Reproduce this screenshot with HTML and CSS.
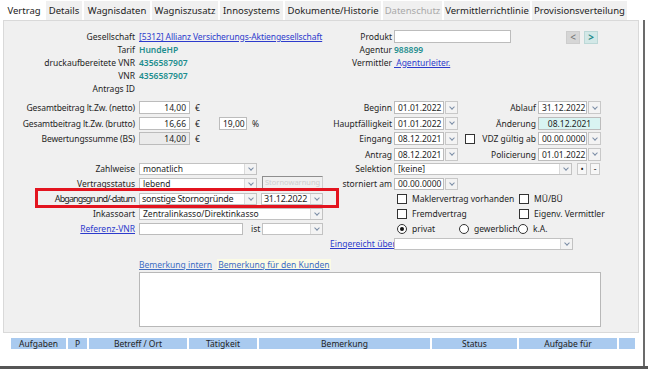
FILE: index.html
```html
<!DOCTYPE html>
<html lang="de">
<head>
    <meta charset="UTF-8">
    <title>Vertrag</title>
    <link rel="stylesheet" href="styles.css">
</head>
<body>
<div class="tabs">
    <div class="tab active w40">Vertrag</div>
    <div class="tab w36">Details</div>
    <div class="tab w66">Wagnisdaten</div>
    <div class="tab w66">Wagniszusatz</div>
    <div class="tab w63">Innosystems</div>
    <div class="tab w96">Dokumente/Historie</div>
    <div class="tab off w59">Datenschutz</div>
    <div class="tab w86">Vermittlerrichtlinie</div>
    <div class="tab w95">Provisionsverteilung</div>
</div>
<div class="frame">
    <div class="panel">
        <!-- Kopfdaten -->
        <div class="sec top">
            <div class="block b-head">
                <span class="lbl">Gesellschaft</span>
                <a class="link tight1">[5312] Allianz Versicherungs-Aktiengesellschaft</a>
                <span class="lbl">Tarif</span>
                <span class="val">HundeHP</span>
                <span class="lbl">druckaufbereitete VNR</span>
                <span class="val">4356587907</span>
                <span class="lbl">VNR</span>
                <span class="val">4356587907</span>
                <span class="lbl">Antrags ID</span>
                <span></span>
            </div>
            <div class="block b-prod">
                <span class="lbl">Produkt</span>
                <div class="field"></div>
                <span class="lbl">Agentur</span>
                <span class="val">988899</span>
                <span class="lbl">Vermittler</span>
                <span><a class="link">&nbsp;Agenturleiter.</a></span>
            </div>
            <div class="nav">
                <span class="navbtn">&lt;</span>
                <span class="navbtn next">&gt;</span>
            </div>
        </div>

        <!-- Beitrag und Termine -->
        <div class="sec mid">
            <div class="block b-left">
                <span class="lbl tight">Gesamtbeitrag lt.Zw. (netto)</span>
                <div class="row"><div class="field num w51">14,00</div><span class="unit">€</span></div>
                <span class="lbl tight">Gesamtbeitrag lt.Zw. (brutto)</span>
                <div class="row"><div class="field num w51">16,66</div><span class="unit">€</span><div class="field num w28">19,00</div><span class="unit">%</span></div>
                <span class="lbl tight">Bewertungssumme (BS)</span>
                <div class="row"><div class="field num w51 ro">14,00</div><span class="unit">€</span></div>
            </div>
            <div class="block b-mid">
                <span class="lbl">Beginn</span>
                <div class="date"><div class="field">01.01.2022</div><i class="arr"></i></div>
                <span class="lbl">Hauptfälligkeit</span>
                <div class="date"><div class="field">01.01.2022</div><i class="arr"></i></div>
                <span class="lbl">Eingang</span>
                <div class="date"><div class="field">08.12.2021</div><i class="arr"></i></div>
                <span class="lbl">Antrag</span>
                <div class="date"><div class="field">08.12.2021</div><i class="arr"></i></div>
            </div>
            <div class="block b-right">
                <span class="lbl">Ablauf</span>
                <div class="date"><div class="field">31.12.2022</div><i class="arr"></i></div>
                <span class="lbl">Änderung</span>
                <div class="field changed">08.12.2021</div>
                <span class="lbl cbl"><i class="cb"></i><span>VDZ gültig ab</span></span>
                <div class="date"><div class="field">00.00.0000</div><i class="arr"></i></div>
                <span class="lbl">Policierung</span>
                <div class="date"><div class="field">01.01.2022</div><i class="arr"></i></div>
            </div>
        </div>

        <!-- Status -->
        <div class="sec low">
            <div class="block b-left">
                <span class="lbl">Zahlweise</span>
                <div class="combo w118"><span>monatlich</span><i class="arr"></i></div>
                <span class="lbl">Vertragsstatus</span>
                <div class="row">
                    <div class="combo w118"><span>lebend</span><i class="arr"></i></div>
                    <div class="storno">Stornowarnung</div>
                </div>
                <span class="lbl big-lbl">Abgangsgrund/-datum</span>
                <div class="row">
                    <div class="combo w118 big"><span>sonstige Stornogründe</span><i class="arr"></i></div>
                    <div class="combo w62 big gap4"><span>31.12.2022</span><i class="arr"></i></div>
                </div>
                <span class="lbl">Inkassoart</span>
                <div class="combo w184"><span>Zentralinkasso/Direktinkasso</span><i class="arr"></i></div>
                <span class="lbl"><a class="link">Referenz-VNR</a></span>
                <div class="row">
                    <div class="field w104"></div>
                    <span class="ist">ist</span>
                    <div class="combo w61"><span></span><i class="arr"></i></div>
                </div>
            </div>
            <div class="block b-sel">
                <span class="lbl">Selektion</span>
                <div class="row">
                    <div class="combo w178"><span>[keine]</span><i class="arr"></i></div>
                    <span class="mini">•</span>
                    <span class="mini second">-</span>
                </div>
                <span class="lbl">storniert am</span>
                <div class="date"><div class="field">00.00.0000</div><i class="arr"></i></div>
                <span></span>
                <div class="row opts">
                    <span class="opt w122"><i class="cb"></i>Maklervertrag vorhanden</span>
                    <span class="opt"><i class="cb"></i>MÜ/BÜ</span>
                </div>
                <span></span>
                <div class="row opts">
                    <span class="opt w122"><i class="cb"></i>Fremdvertrag</span>
                    <span class="opt"><i class="cb"></i>Eigenv. Vermittler</span>
                </div>
                <span></span>
                <div class="row opts">
                    <span class="opt w62"><i class="rb on"></i>privat</span>
                    <span class="opt w59"><i class="rb"></i>gewerblich</span>
                    <span class="opt"><i class="rb"></i>k.A.</span>
                </div>
                <span class="lbl"><a class="link">Eingereicht über</a></span>
                <div class="combo w179"><span></span><i class="arr"></i></div>
            </div>
        </div>

        <div class="remarks">
            <div class="rtabs">
                <a class="rlink">Bemerkung intern</a>
                <a class="rlink cust">Bemerkung für den Kunden</a>
            </div>
            <div class="rbox"></div>
        </div>

        <div class="mark"></div>
    </div>

    <div class="tasks">
        <div class="th w55">Aufgaben</div>
        <div class="th w19">P</div>
        <div class="th w98">Betreff / Ort</div>
        <div class="th w68">Tätigkeit</div>
        <div class="th w171">Bemerkung</div>
        <div class="th w85">Status</div>
        <div class="th w98">Aufgabe für</div>
        <div class="th w16"></div>
    </div>
</div>
<div class="bottom"></div>
</body>
</html>
```

FILE: styles.css
```css
*{
    box-sizing: border-box;
}
body{
    margin: 0;
    width: 648px;
    height: 369px;
    overflow: hidden;
    background-color: #fff;
    font-family: "Noto Sans", sans-serif;
    font-size: 8.5px;
    color: #1e1e1e;
}
a{
    cursor: pointer;
}

/* widths */
.w16{width: 16px;}
.w19{width: 19px;}
.w28{width: 28px;}
.w36{width: 36px;}
.w40{width: 40px;}
.w51{width: 51px;}
.w55{width: 55px;}
.w59{width: 59px;}
.w61{width: 61px;}
.w62{width: 62px;}
.w63{width: 63px;}
.w66{width: 66px;}
.w68{width: 68px;}
.w85{width: 85px;}
.w86{width: 86px;}
.w95{width: 95px;}
.w96{width: 96px;}
.w98{width: 98px;}
.w104{width: 104px;}
.w118{width: 118px;}
.w122{width: 122px;}
.w171{width: 171px;}
.w178{width: 178px;}
.w179{width: 179px;}
.w184{width: 184px;}

/* tabs */
.tabs{
    display: flex;
    gap: 2px;
    height: 20px;
    padding: 1px 0 0 4px;
}
.tab{
    height: 19px;
    line-height: 19px;
    text-align: center;
    font-size: 9.5px;
    background-color: #f0f0f0;
    color: #222;
    white-space: nowrap;
}
.tab.active{
    background-color: #fff;
}
.tab.off{
    color: #a8a8a8;
}

/* frame */
.frame{
    width: 645px;
    height: 346px;
    border-right: 2px solid #6b6b6b;
}
.panel{
    position: relative;
    margin-left: 3px;
    width: 636px;
    height: 313px;
    border: 1px solid #d9d9d9;
    background-color: #f0f0f0;
    padding-top: 9px;
}
.sec{
    display: flex;
}
.block{
    display: grid;
    align-items: center;
}
.lbl{
    text-align: right;
    white-space: nowrap;
    line-height: 13px;
}
.tight{
    letter-spacing: -0.1px;
}
.tight1{
    letter-spacing: -0.1px;
}
.val{
    color: #1d8e8e;
    font-weight: 600;
    white-space: nowrap;
}
.link{
    color: #2d3bcc;
    text-decoration: underline;
    white-space: nowrap;
}
.row{
    display: flex;
    align-items: center;
}

/* top */
.top{
    height: 65px;
}
.top .block{
    grid-auto-rows: 13px;
}
.b-head{
    width: 336px;
    grid-template-columns: 131px 201px;
    column-gap: 4px;
}
.b-prod{
    width: 171px;
    grid-template-columns: 52px 117px;
    column-gap: 2px;
}
.nav{
    display: flex;
    gap: 4px;
    margin: 1px 0 0 55px;
    height: 13px;
}
.navbtn{
    width: 14px;
    height: 13px;
    border: 1px solid #cdcdcd;
    background-color: #d6d6d6;
    color: #707070;
    font-size: 10px;
    line-height: 11px;
    text-align: center;
}
.navbtn.next{
    background-color: #d3e8e7;
    border-color: #bcd8d7;
    color: #1f8a8a;
    font-weight: bold;
}

/* inputs */
.field{
    height: 13px;
    border: 1px solid #bcbcbc;
    background-color: #fff;
    padding: 0 3px;
    line-height: 11px;
    white-space: nowrap;
    overflow: hidden;
}
.num{
    text-align: right;
}
.ro{
    background-color: #ebebeb;
}
.unit{
    width: 29px;
    padding-left: 5px;
}
.changed{
    background-color: #d9f4f2;
    text-align: center;
}
.date{
    display: flex;
    gap: 1px;
}
.date .field{
    width: 50px;
}
.arr{
    width: 13px;
    height: 13px;
    border: 1px solid #c8c8c8;
    background-color: #f3f3f3;
    display: flex;
    align-items: center;
    justify-content: center;
    flex: none;
}
.arr::after{
    content: "";
    width: 3px;
    height: 3px;
    margin-top: -2px;
    border-right: 1px solid #7b8da6;
    border-bottom: 1px solid #7b8da6;
    transform: rotate(45deg);
}

/* mid */
.mid{
    margin-top: 6px;
}
.mid .block{
    grid-auto-rows: 13px;
    row-gap: 2.5px;
}
.b-left{
    width: 326px;
    grid-template-columns: 131px 191px;
    column-gap: 4px;
}
.b-mid{
    width: 130px;
    grid-template-columns: 62px 66px;
    column-gap: 2px;
}
.b-right{
    width: 141px;
    grid-template-columns: 76px 63px;
    column-gap: 2px;
}
.cbl{
    display: flex;
    align-items: center;
    justify-content: space-between;
    padding-left: 5px;
}

/* low */
.low{
    margin-top: 2px;
}
.low .block{
    grid-auto-rows: 12px;
    row-gap: 3px;
}
.low .lbl{
    line-height: 12px;
}
.low .field,
.low .arr{
    height: 12px;
    line-height: 10px;
}
.b-sel{
    width: 279px;
    grid-template-columns: 62px 215px;
    column-gap: 2px;
}
.combo{
    display: flex;
    height: 12px;
    border: 1px solid #c2c2c2;
    background-color: #fff;
}
.combo span{
    flex: 1;
    padding: 0 3px;
    line-height: 10px;
    white-space: nowrap;
    overflow: hidden;
}
.combo .arr{
    width: 12px;
    height: 10px;
    border: none;
    border-left: 1px solid #dadada;
}
.big{
    font-size: 9px;
    letter-spacing: -0.3px;
}
.big span{
    padding: 0 2px;
    overflow: visible;
}
.big-lbl{
    font-size: 9px;
    letter-spacing: -0.9px;
}
.gap4{
    margin-left: 4px;
}
.storno{
    width: 61px;
    height: 13px;
    margin: -2px 0 0 5px;
    border: 1px solid #8e8e8e;
    border-right-color: #cfcfcf;
    border-bottom-color: #cfcfcf;
    color: #cdcdcd;
    font-size: 7.5px;
    padding-left: 2px;
    line-height: 11px;
    white-space: nowrap;
    overflow: hidden;
}
.ist{
    width: 19px;
    padding-left: 8px;
}
.mini{
    width: 10px;
    height: 12px;
    margin-left: 5px;
    border: 1px solid #c9c9c9;
    background-color: #f7f7f7;
    line-height: 10px;
    text-align: center;
}
.mini.second{
    margin-left: 3px;
}
.opts{
    padding-left: 3px;
}
.opt{
    display: flex;
    align-items: center;
    gap: 5px;
    white-space: nowrap;
}
.cb{
    width: 10px;
    height: 10px;
    border: 1px solid #333;
    background-color: #fff;
    flex: none;
}
.rb{
    width: 10px;
    height: 10px;
    border: 1px solid #333;
    border-radius: 50%;
    background-color: #fff;
    display: flex;
    align-items: center;
    justify-content: center;
    flex: none;
}
.rb.on::after{
    content: "";
    width: 4px;
    height: 4px;
    border-radius: 50%;
    background-color: #111;
}

/* remarks */
.remarks{
    margin: 9px 0 0 135px;
}
.rtabs{
    display: flex;
    gap: 5px;
    height: 11px;
    line-height: 11px;
}
.rlink{
    color: #3d6cc4;
    text-decoration: underline;
}
.rlink.cust{
    background-color: #fbfbe5;
    padding: 0 1px;
}
.rbox{
    margin-top: 2.5px;
    width: 462px;
    height: 55px;
    border: 1px solid #b8b8b8;
    background-color: #fff;
}

/* red marker over the Abgang row */
.mark{
    position: absolute;
    left: 31px;
    top: 167px;
    width: 304px;
    height: 20px;
    border: 3px solid #e3141f;
}

/* tasks table */
.tasks{
    display: flex;
    gap: 2px;
    margin: 5px 0 0 11px;
    height: 11px;
}
.th{
    background-color: #a9caef;
    text-align: center;
    line-height: 11px;
    color: #222;
    white-space: nowrap;
}
.bottom{
    height: 3px;
    background-color: #565656;
}
```
